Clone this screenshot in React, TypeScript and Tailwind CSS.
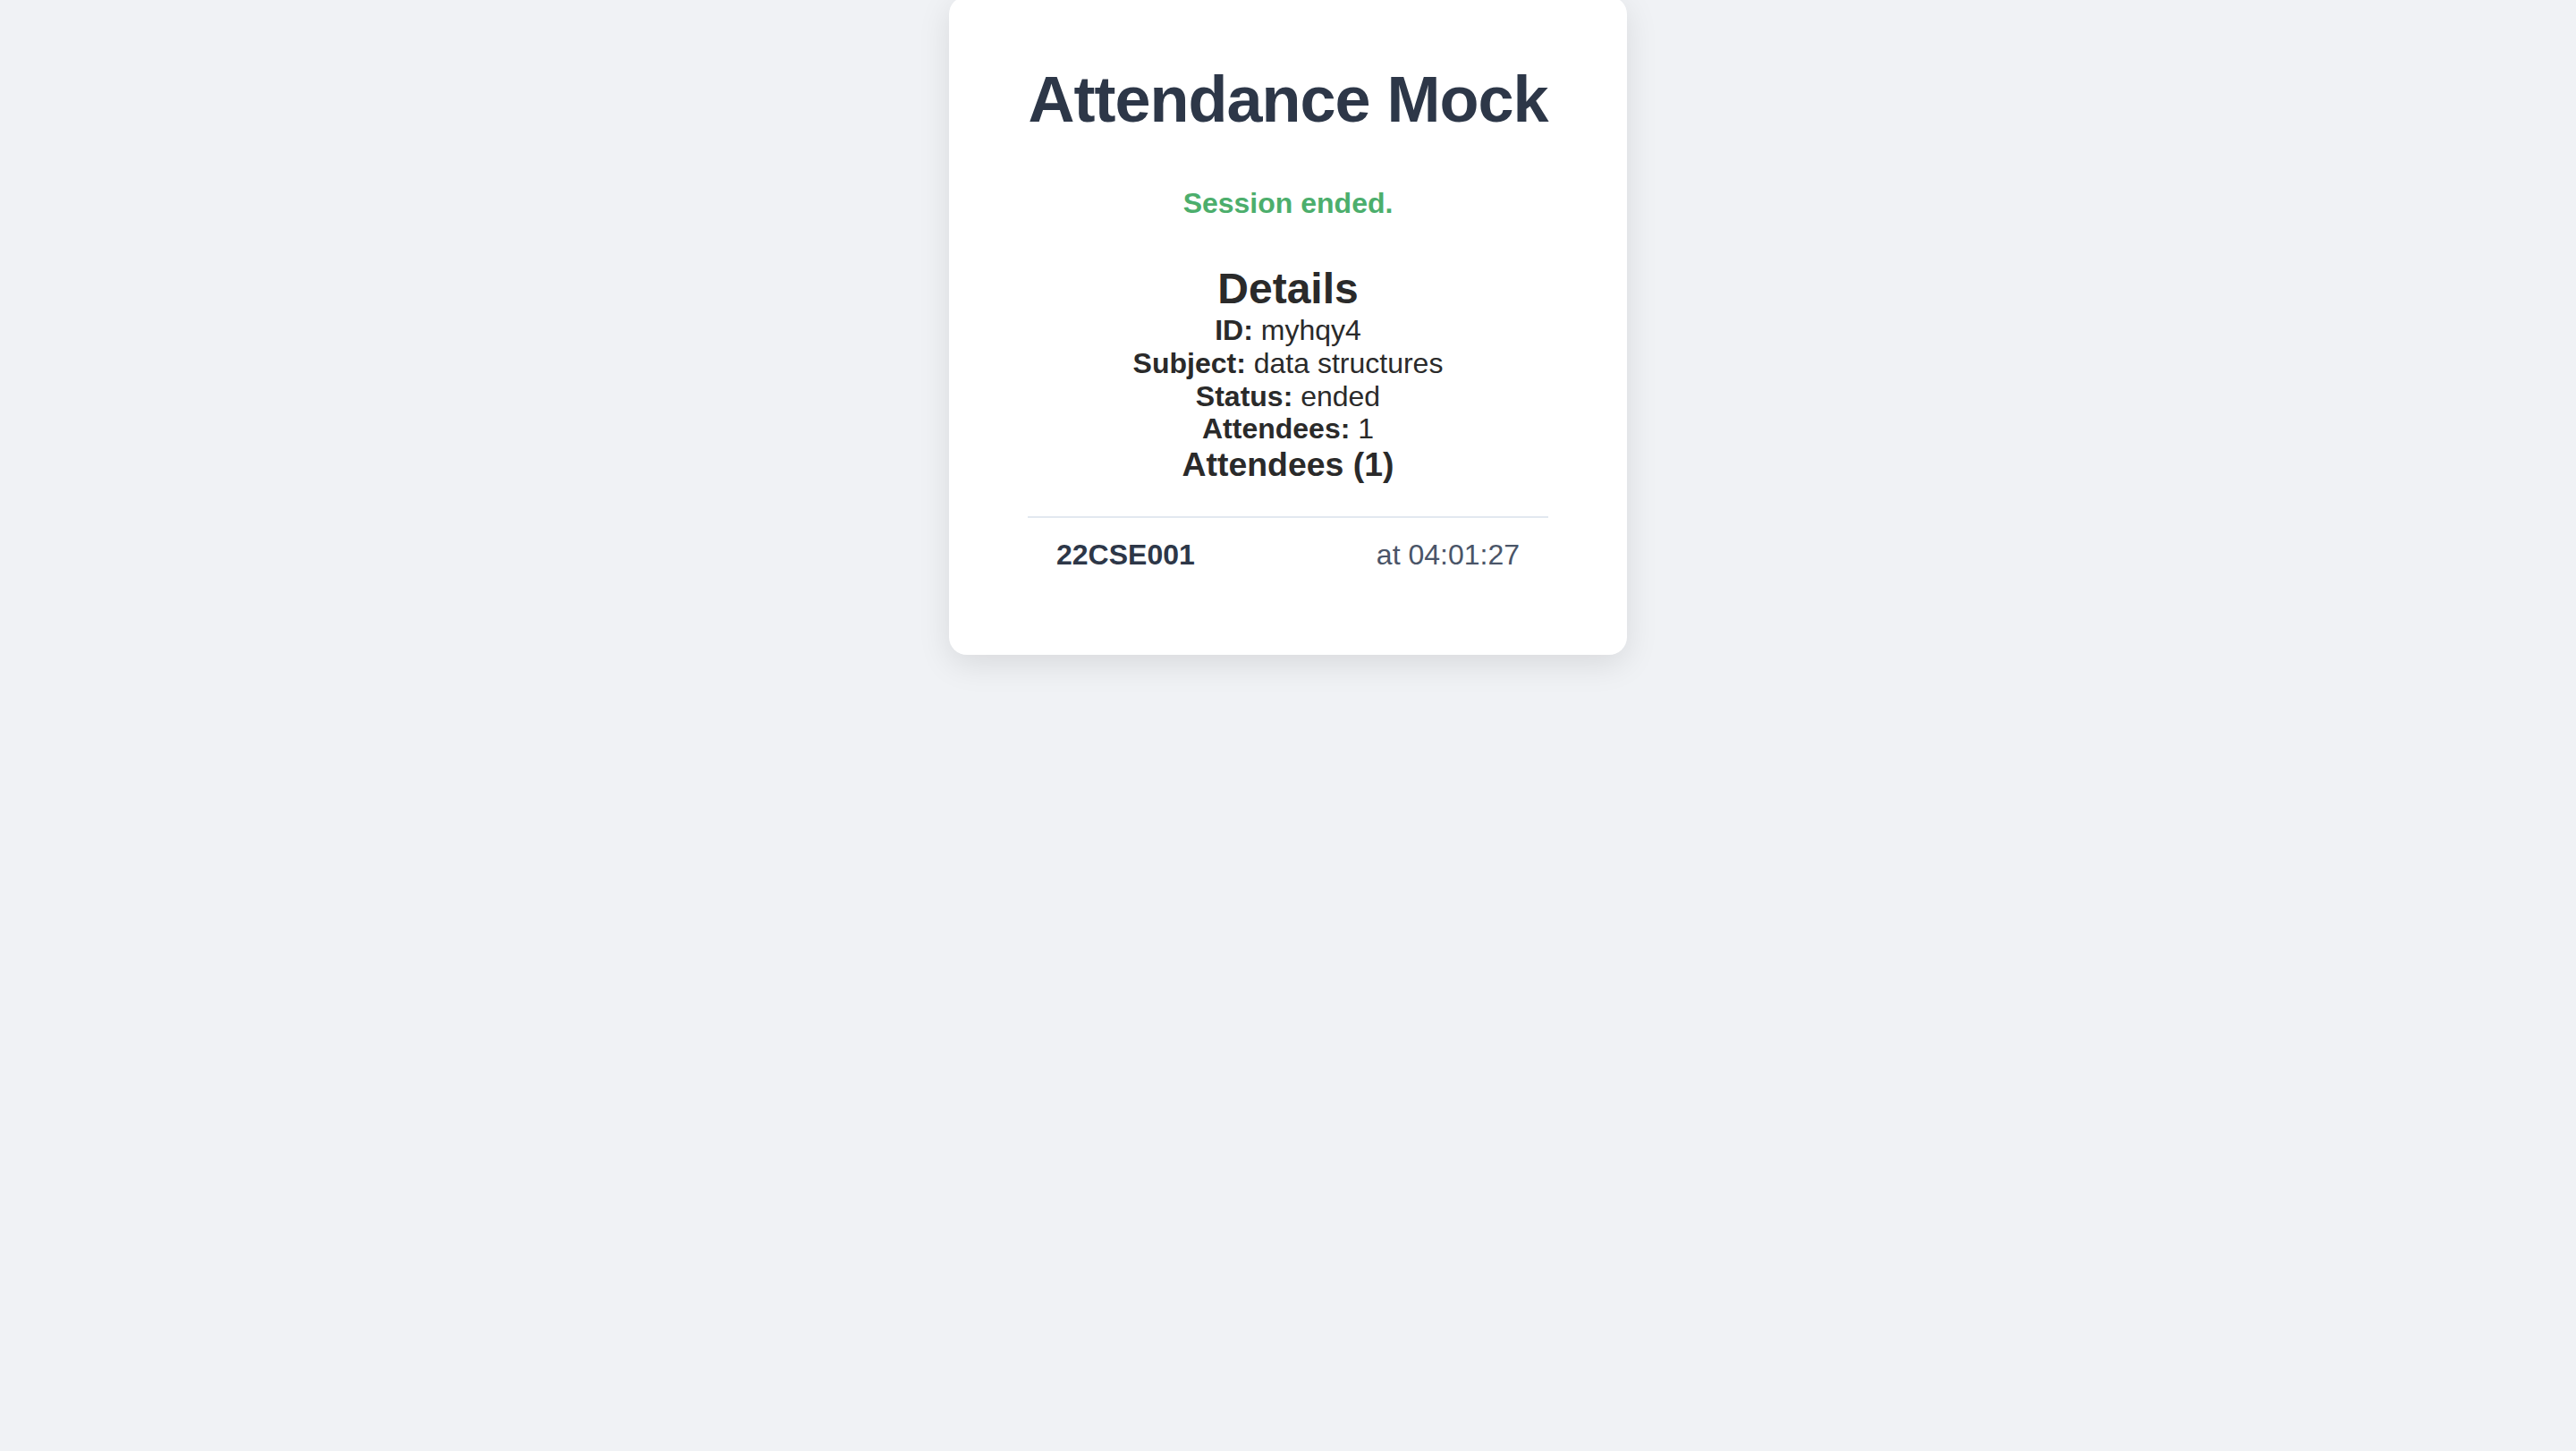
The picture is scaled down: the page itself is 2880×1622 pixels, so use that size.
import React from "react";

export default function App() {
  return (
    <div
      className="min-h-screen w-full bg-[#f0f2f5] flex justify-center"
      style={{ fontFamily: '"Liberation Sans", Arial, Helvetica, sans-serif' }}
    >
      <div className="w-[758px] h-[736px] -mt-[4px] bg-white rounded-[20px] shadow-[0_10px_36px_rgba(0,0,0,0.10)] px-[88px] pt-[75px] flex flex-col">
        <h1 className="text-[72px] leading-[80px] font-bold text-[#2d3748] text-center tracking-[-1px]">
          Attendance Mock
        </h1>
        <p className="mt-[58px] text-[32px] leading-[36px] font-bold text-[#4cae6c] text-center">
          Session ended.
        </p>
        <h2 className="mt-[50px] text-[48px] leading-[56px] font-bold text-[#2a2a2a] text-center">
          Details
        </h2>
        <div className="text-[32px] leading-[36.8px] text-[#2a2a2a] text-center">
          <div>
            <span className="font-bold">ID:</span> myhqy4
          </div>
          <div>
            <span className="font-bold">Subject:</span> data structures
          </div>
          <div>
            <span className="font-bold">Status:</span> ended
          </div>
          <div>
            <span className="font-bold">Attendees:</span> 1
          </div>
        </div>
        <h3 className="text-[37.4px] leading-[43px] font-bold text-[#2a2a2a] text-center">
          Attendees (1)
        </h3>
        <div className="mt-[36px] border-t-2 border-[#e2e8f0]">
          <div className="flex justify-between items-center px-8 pt-[23px] pb-[22px] text-[32px] leading-[36.8px]">
            <span className="font-bold text-[#2d3748]">22CSE001</span>
            <span className="text-[#4a5568]">at 04:01:27</span>
          </div>
        </div>
      </div>
    </div>
  );
}
